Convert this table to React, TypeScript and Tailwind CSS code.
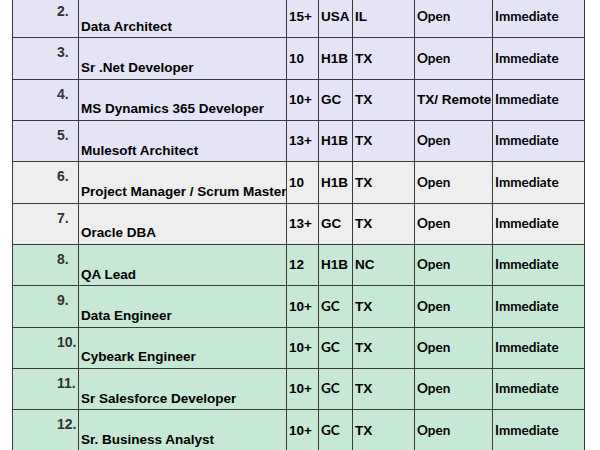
const rows = [
  { n: '2.', role: 'Data Architect', exp: '15+', visa: 'USA', st: 'IL', loc: 'Open', start: 'Immediate', bg: 'bg-[#e5e4f7]' },
  { n: '3.', role: 'Sr .Net Developer', exp: '10', visa: 'H1B', st: 'TX', loc: 'Open', start: 'Immediate', bg: 'bg-[#e5e4f7]' },
  { n: '4.', role: 'MS Dynamics 365 Developer', exp: '10+', visa: 'GC', st: 'TX', loc: 'TX/ Remote', start: 'Immediate', bg: 'bg-[#e5e4f7]', arialLoc: true },
  { n: '5.', role: 'Mulesoft Architect', exp: '13+', visa: 'H1B', st: 'TX', loc: 'Open', start: 'Immediate', bg: 'bg-[#e5e4f7]' },
  { n: '6.', role: 'Project Manager / Scrum Master', exp: '10', visa: 'H1B', st: 'TX', loc: 'Open', start: 'Immediate', bg: 'bg-[#eeeeee]' },
  { n: '7.', role: 'Oracle DBA', exp: '13+', visa: 'GC', st: 'TX', loc: 'Open', start: 'Immediate', bg: 'bg-[#eeeeee]' },
  { n: '8.', role: 'QA Lead', exp: '12', visa: 'H1B', st: 'NC', loc: 'Open', start: 'Immediate', bg: 'bg-[#c7e8d5]' },
  { n: '9.', role: 'Data Engineer', exp: '10+', visa: 'GC', st: 'TX', loc: 'Open', start: 'Immediate', bg: 'bg-[#c7e8d5]', lightVisa: true },
  { n: '10.', role: 'Cybeark Engineer', exp: '10+', visa: 'GC', st: 'TX', loc: 'Open', start: 'Immediate', bg: 'bg-[#c7e8d5]', lightVisa: true },
  { n: '11.', role: 'Sr Salesforce Developer', exp: '10+', visa: 'GC', st: 'TX', loc: 'Open', start: 'Immediate', bg: 'bg-[#c7e8d5]', lightVisa: true },
  { n: '12.', role: 'Sr. Business Analyst', exp: '10+', visa: 'GC', st: 'TX', loc: 'Open', start: 'Immediate', bg: 'bg-[#c7e8d5]', lightVisa: true },
];

const arial = "font-['Liberation_Sans',Arial,sans-serif] font-bold";
const calibri = "font-['Lato','Open_Sans',sans-serif] font-bold";
const cell = 'border border-[#3a3a3a] p-0 px-[2px]';

export default function App() {
  return (
    <div className="w-[600px] h-[450px] overflow-hidden bg-white">
      <table className="ml-[12px] -mt-[4px] w-[572px] table-fixed border-collapse text-[13.5px] leading-none text-black">
        <colgroup>
          <col className="w-[66px]" />
          <col className="w-[208px]" />
          <col className="w-[32px]" />
          <col className="w-[34px]" />
          <col className="w-[62px]" />
          <col className="w-[78px]" />
          <col className="w-[92px]" />
        </colgroup>
        <tbody>
          {rows.map((r) => (
            <tr key={r.n} className={`h-[41.33px] ${r.bg}`}>
              <td className={`${cell} ${arial} align-top pl-[44px] pt-[7px] text-[14px] text-[#333333]`}>{r.n}</td>
              <td className={`${cell} ${arial} align-bottom pb-[4px] whitespace-nowrap`}>{r.role}</td>
              <td className={`${cell} ${arial} align-middle whitespace-nowrap`}>{r.exp}</td>
              <td className={`${cell} ${r.lightVisa ? calibri : arial} align-middle whitespace-nowrap`}>{r.visa}</td>
              <td className={`${cell} ${arial} align-middle whitespace-nowrap`}>{r.st}</td>
              <td className={`${cell} ${r.arialLoc ? arial : calibri} align-middle whitespace-nowrap`}>{r.loc}</td>
              <td className={`${cell} ${calibri} align-middle whitespace-nowrap`}>{r.start}</td>
            </tr>
          ))}
        </tbody>
      </table>
    </div>
  );
}
